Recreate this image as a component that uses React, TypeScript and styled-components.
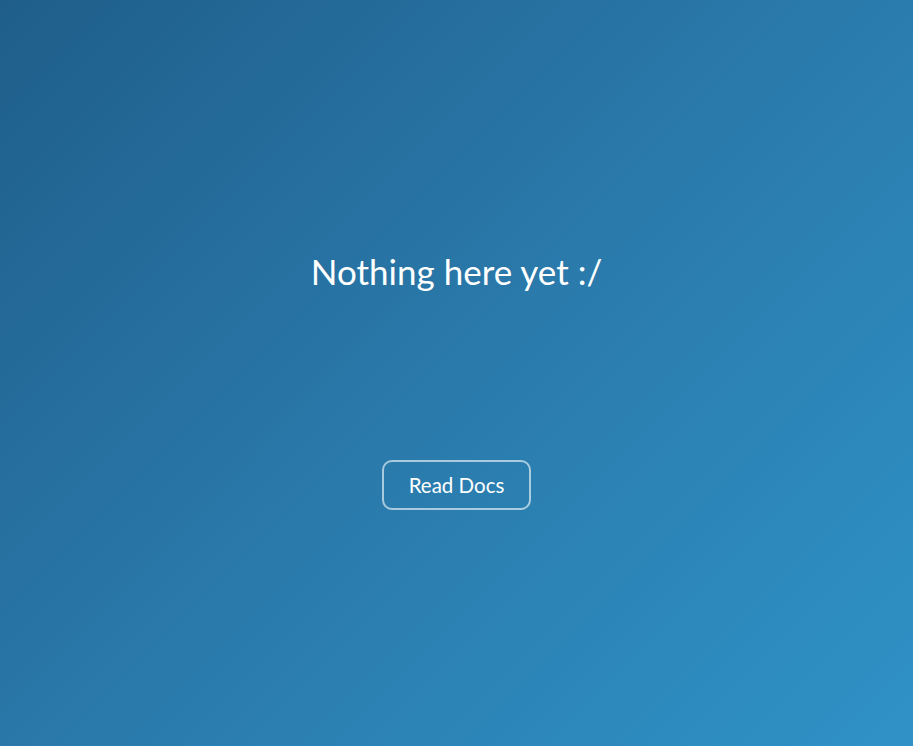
import React from "react";
import styled, { createGlobalStyle } from "styled-components";

const Global = createGlobalStyle`
  html, body { margin: 0; padding: 0; height: 100%; }
  body { font-family: "Lato", "Open Sans", sans-serif; }
  #root { height: 100%; }
`;

const Page = styled.div`
  box-sizing: border-box;
  min-height: 100vh;
  width: 100%;
  background: linear-gradient(135deg, #1f5e8b 0%, #2a7aab 50%, #2f92c7 100%);
  display: flex;
  flex-direction: column;
  align-items: center;
  padding-top: 250px;
  color: #ffffff;
`;

const Title = styled.h1`
  margin: 0;
  font-size: 35px;
  font-weight: 400;
  line-height: 42px;
  letter-spacing: 0;
`;

const DocsButton = styled.a`
  margin-top: 168px;
  box-sizing: border-box;
  width: 149px;
  height: 50px;
  display: flex;
  align-items: center;
  justify-content: center;
  border: 2px solid rgba(255, 255, 255, 0.6);
  border-radius: 10px;
  color: #ffffff;
  font-size: 20.5px;
  text-decoration: none;
  cursor: pointer;
`;

export default function App() {
  return (
    <>
      <Global />
      <Page>
        <Title>Nothing here yet :/</Title>
        <DocsButton>Read Docs</DocsButton>
      </Page>
    </>
  );
}
